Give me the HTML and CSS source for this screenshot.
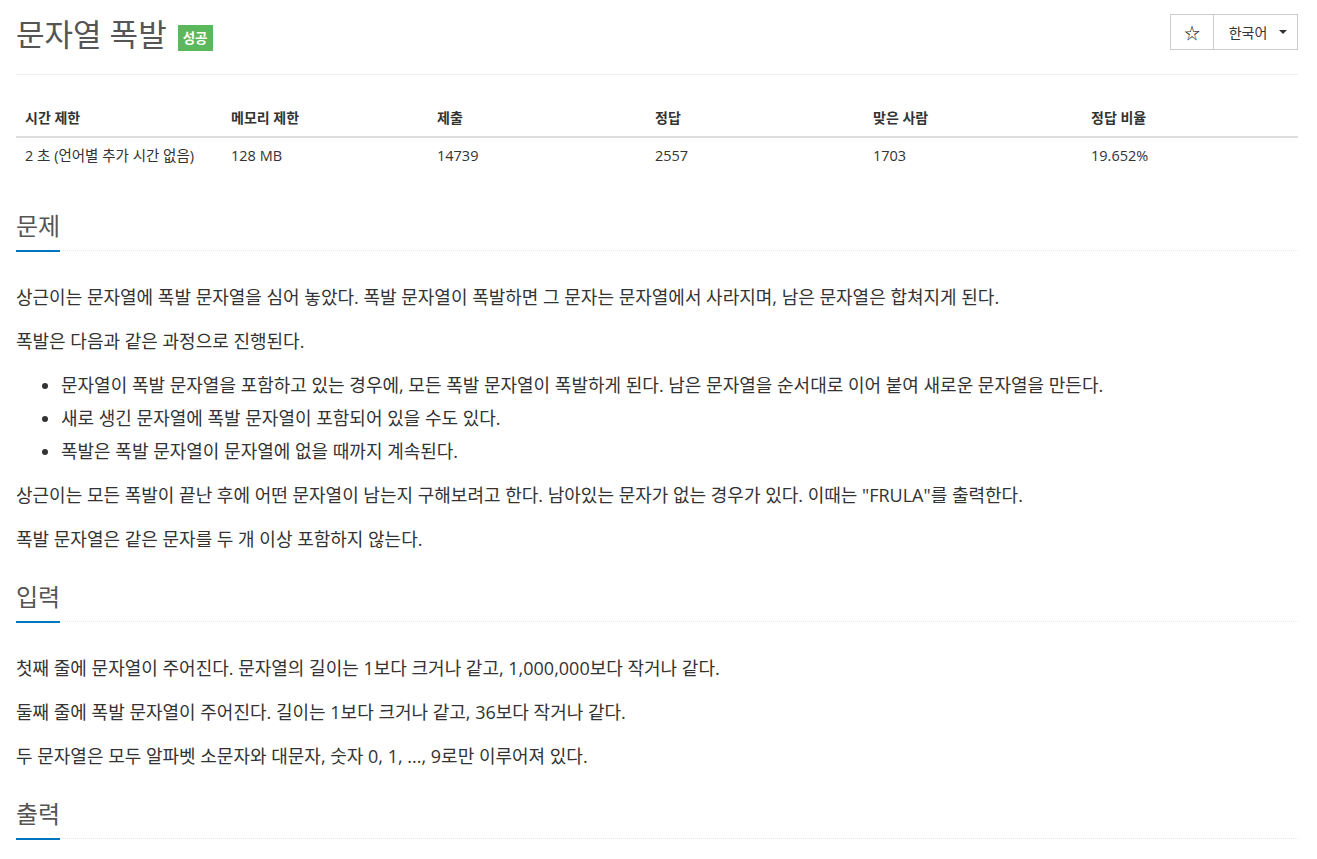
FILE: index.html
```html
<!DOCTYPE html>
<html lang="ko">
<head>
<meta charset="utf-8">
<title>문자열 폭발</title>
<link rel="stylesheet" href="styles.css">
</head>
<body>
<div class="page">
  <div class="page-header">
    <h1 class="title"><span class="title-text">문자열 폭발</span><span class="label-success">성공</span></h1>
    <div class="btn-group">
      <button class="btn btn-star" type="button">☆</button>
      <button class="btn btn-lang" type="button">한국어 <span class="caret"></span></button>
    </div>
  </div>

  <table class="info-table">
    <thead>
      <tr>
        <th>시간 제한</th>
        <th>메모리 제한</th>
        <th>제출</th>
        <th>정답</th>
        <th>맞은 사람</th>
        <th>정답 비율</th>
      </tr>
    </thead>
    <tbody>
      <tr>
        <td>2 초 (언어별 추가 시간 없음)</td>
        <td>128 MB</td>
        <td>14739</td>
        <td>2557</td>
        <td>1703</td>
        <td>19.652%</td>
      </tr>
    </tbody>
  </table>

  <section class="section">
    <div class="headline"><h2>문제</h2></div>
    <div class="problem-text">
      <p>상근이는 문자열에 폭발 문자열을 심어 놓았다. 폭발 문자열이 폭발하면 그 문자는 문자열에서 사라지며, 남은 문자열은 합쳐지게 된다.</p>
      <p>폭발은 다음과 같은 과정으로 진행된다.</p>
      <ul>
        <li>문자열이 폭발 문자열을 포함하고 있는 경우에, 모든 폭발 문자열이 폭발하게 된다. 남은 문자열을 순서대로 이어 붙여 새로운 문자열을 만든다.</li>
        <li>새로 생긴 문자열에 폭발 문자열이 포함되어 있을 수도 있다.</li>
        <li>폭발은 폭발 문자열이 문자열에 없을 때까지 계속된다.</li>
      </ul>
      <p>상근이는 모든 폭발이 끝난 후에 어떤 문자열이 남는지 구해보려고 한다. 남아있는 문자가 없는 경우가 있다. 이때는 "FRULA"를 출력한다.</p>
      <p>폭발 문자열은 같은 문자를 두 개 이상 포함하지 않는다.</p>
    </div>
  </section>

  <section class="section">
    <div class="headline"><h2>입력</h2></div>
    <div class="problem-text">
      <p>첫째 줄에 문자열이 주어진다. 문자열의 길이는 1보다 크거나 같고, 1,000,000보다 작거나 같다.</p>
      <p>둘째 줄에 폭발 문자열이 주어진다. 길이는 1보다 크거나 같고, 36보다 작거나 같다.</p>
      <p>두 문자열은 모두 알파벳 소문자와 대문자, 숫자 0, 1, ..., 9로만 이루어져 있다.</p>
    </div>
  </section>

  <section class="section">
    <div class="headline"><h2>출력</h2></div>
  </section>
</div>
</body>
</html>
```
FILE: styles.css
```css
* { box-sizing: border-box; }
html, body { margin: 0; padding: 0; background: #fff; }
body {
  font-family: "Open Sans", "Noto Sans CJK KR", sans-serif;
  font-size: 14px;
  line-height: 1.42857;
  color: #333;
}
.page {
  width: 1282px;
  margin-left: 16px;
}
.page-header {
  display: flex;
  justify-content: space-between;
  align-items: flex-start;
  height: 75px;
  border-bottom: 1px solid #eee;
  padding-top: 14px;
}
.title {
  margin: 3px 0 0 0;
  font-size: 31px;
  font-weight: 400;
  line-height: 34px;
  color: #555;
  display: flex;
  align-items: center;
}
.label-success {
  display: inline-block;
  margin-left: 11px;
  margin-top: 8px;
  padding: 4px 5px;
  background: #5cb85c;
  color: #fff;
  font-size: 13.5px;
  font-weight: 700;
  line-height: 18px;
}
.btn-group { display: flex; }
.btn {
  font-family: inherit;
  background: #fff;
  border: 1px solid #ccc;
  color: #333;
  font-size: 14px;
  height: 36px;
  margin: 0;
  padding: 0;
  cursor: pointer;
}
.btn-star { width: 44px; font-size: 16px; color: #222; }
.btn-lang { width: 85px; margin-left: -1px; padding-left: 5px; display: flex; align-items: center; justify-content: center; gap: 12px; }
.caret {
  display: inline-block;
  width: 0; height: 0;
  border-top: 4px solid #333;
  border-left: 4px solid transparent;
  border-right: 4px solid transparent;
}
.info-table {
  width: 100%;
  border-collapse: collapse;
  margin: 25px 0 35px 0;
  table-layout: fixed;
  font-size: 14.5px;
}
.info-table th, .info-table td {
  text-align: left;
  padding: 8px 9px;
  line-height: 20px;
}
.info-table th { border-bottom: 2px solid #ddd; font-weight: 700; font-size: 14px; }
.info-table th:nth-child(1) { width: 206px; }
.info-table th:nth-child(2) { width: 206px; }
.info-table th:nth-child(3) { width: 218px; }
.info-table th:nth-child(4) { width: 218px; }
.info-table th:nth-child(5) { width: 218px; }
.headline {
  border-bottom: 1px dotted #e4e9f0;
  margin: 24px 0 30px 0;
}
.headline h2 {
  display: inline-block;
  margin: 0 0 -2px 0;
  padding-bottom: 8px;
  border-bottom: 2px solid #0076c0;
  font-size: 24px;
  font-weight: 400;
  line-height: 33px;
  color: #555;
}
.problem-text { font-size: 18px; line-height: 33px; }
.problem-text p { margin: 0 0 11px 0; }
.problem-text ul { margin: 0 0 11px 0; padding-left: 45px; }
```
